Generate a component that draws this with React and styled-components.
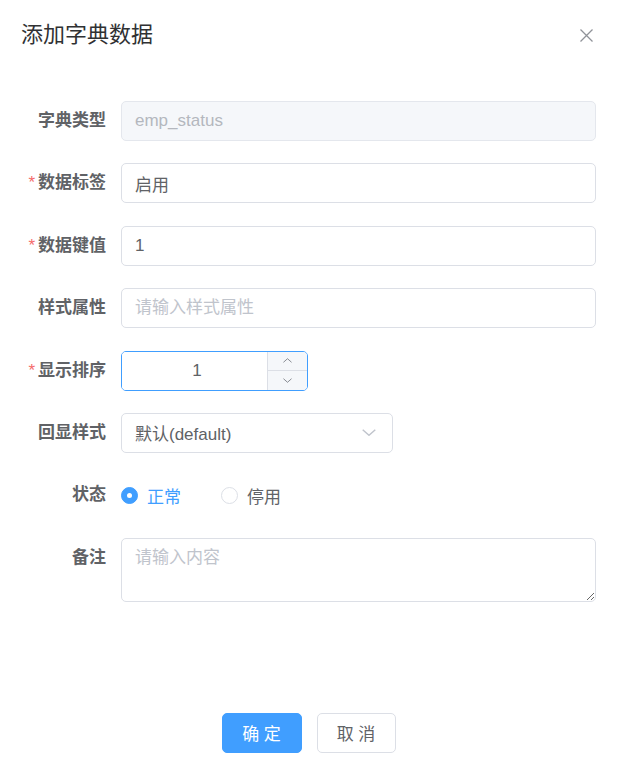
import React from "react";
import styled, { createGlobalStyle } from "styled-components";

const GlobalStyle = createGlobalStyle`
  body {
    margin: 0;
    background: #ffffff;
    font-family: "Liberation Sans", "Noto Sans CJK SC", sans-serif;
  }
  * {
    box-sizing: border-box;
  }
`;

//Layout
const Dialog = styled.div`
  width: 617px;
  height: 775px;
  background: #ffffff;
  display: flex;
  flex-direction: column;
`;

const Header = styled.div`
  display: flex;
  justify-content: space-between;
  align-items: center;
  padding: 20px 24px 10px 21px;
`;

const Title = styled.span`
  font-size: 22px;
  line-height: 30px;
  color: #303133;
`;

const CloseButton = styled.button`
  border: none;
  background: none;
  padding: 0;
  width: 14px;
  height: 14px;
  display: flex;
  align-items: center;
  justify-content: center;
  color: #909399;
  cursor: pointer;
`;

const Form = styled.form`
  padding: 41px 21px 0 21px;
`;

const FormItem = styled.div`
  display: flex;
  align-items: flex-start;
  margin-bottom: 22.4px;
`;

const Label = styled.label`
  width: 100px;
  flex-shrink: 0;
  padding-right: 15px;
  text-align: right;
  font-size: 17px;
  font-weight: 700;
  line-height: 40px;
  color: #606266;

  &::before {
    content: ${(props) => (props.required ? '"*"' : "none")};
    color: #f56c6c;
    margin-right: 3px;
    font-weight: 400;
  }
`;

const Content = styled.div`
  flex: 1;
  min-height: 40px;
  display: flex;
  align-items: center;
`;

//Inputs
const TextInput = styled.input`
  width: 100%;
  height: 40px;
  padding: 0 13px;
  border: 1px solid ${(props) => (props.disabled ? "#E4E7ED" : "#DCDFE6")};
  border-radius: 5px;
  background: ${(props) => (props.disabled ? "#F5F7FA" : "#ffffff")};
  color: ${(props) => (props.disabled ? "#B4B7BE" : "#606266")};
  font-family: inherit;
  font-size: 17px;
  outline: none;

  &::placeholder {
    color: #c0c4cc;
  }
`;

const NumberBox = styled.div`
  width: 187px;
  height: 40px;
  display: flex;
  border: 1px solid #409eff;
  border-radius: 5px;
  overflow: hidden;
`;

const NumberField = styled.input`
  flex: 1;
  min-width: 0;
  border: none;
  outline: none;
  padding: 0 0 0 5px;
  text-align: center;
  font-family: inherit;
  font-size: 17px;
  color: #606266;
`;

const Controls = styled.div`
  width: 40px;
  display: flex;
  flex-direction: column;
  border-left: 1px solid #dcdfe6;
  background: #f5f7fa;
`;

const ControlButton = styled.span`
  flex: 1;
  display: flex;
  align-items: center;
  justify-content: center;
  color: #7d8088;
  border-bottom: ${(props) => (props.top ? "1px solid #DCDFE6" : "none")};
  cursor: pointer;
`;

const Select = styled.div`
  width: 272px;
  height: 40px;
  display: flex;
  align-items: center;
  justify-content: space-between;
  padding: 0 16px 0 13px;
  border: 1px solid #dcdfe6;
  border-radius: 5px;
  font-size: 17px;
  color: #606266;
  cursor: pointer;
`;

const SelectArrow = styled.span`
  display: flex;
  color: #c0c4cc;
`;

const RadioGroup = styled.div`
  height: 40px;
  display: flex;
  align-items: center;
`;

const Radio = styled.label`
  display: inline-flex;
  align-items: center;
  margin-right: 40px;
  font-size: 17px;
  color: ${(props) => (props.checked ? "#409EFF" : "#606266")};
  cursor: pointer;
`;

const RadioDot = styled.span`
  width: 17px;
  height: 17px;
  border-radius: 50%;
  margin-right: 9px;
  border: 1px solid ${(props) => (props.checked ? "#409EFF" : "#DCDFE6")};
  background: ${(props) => (props.checked ? "#409EFF" : "#ffffff")};
  display: flex;
  align-items: center;
  justify-content: center;

  &::after {
    content: "";
    width: 5px;
    height: 5px;
    border-radius: 50%;
    background: #ffffff;
    display: ${(props) => (props.checked ? "block" : "none")};
  }
`;

const TextArea = styled.textarea`
  width: 100%;
  height: 64px;
  padding: 6px 13px;
  border: 1px solid #dcdfe6;
  border-radius: 5px;
  font-family: inherit;
  font-size: 17px;
  line-height: 1.5;
  color: #606266;
  resize: vertical;
  outline: none;

  &::placeholder {
    color: #c0c4cc;
  }
`;

//Footer
const Footer = styled.div`
  display: flex;
  justify-content: center;
  gap: 15px;
  padding-top: 88.8px;
`;

const Button = styled.button`
  width: ${(props) => (props.primary ? "80px" : "79px")};
  height: 40px;
  border-radius: 5px;
  border: 1px solid ${(props) => (props.primary ? "#409EFF" : "#DCDFE6")};
  background: ${(props) => (props.primary ? "#409EFF" : "#ffffff")};
  color: ${(props) => (props.primary ? "#ffffff" : "#606266")};
  font-family: inherit;
  font-size: 17px;
  white-space: pre;
  cursor: pointer;
`;

const Chevron = ({ up, width = 9, height = 5 }) => (
  <svg width={width} height={height} viewBox="0 0 10 5" fill="none">
    <path
      d={up ? "M0.5 4.5 L5 0.5 L9.5 4.5" : "M0.5 0.5 L5 4.5 L9.5 0.5"}
      stroke="currentColor"
      strokeWidth="1"
    />
  </svg>
);

export default function App() {
  return (
    <Dialog>
      <GlobalStyle />
      <Header>
        <Title>添加字典数据</Title>
        <CloseButton type="button">
          <svg width="13" height="13" viewBox="0 0 13 13">
            <path
              d="M0.5 0.5 L12.5 12.5 M12.5 0.5 L0.5 12.5"
              stroke="currentColor"
              strokeWidth="1.3"
            />
          </svg>
        </CloseButton>
      </Header>
      <Form>
        <FormItem>
          <Label>字典类型</Label>
          <Content>
            <TextInput disabled defaultValue="emp_status" />
          </Content>
        </FormItem>
        <FormItem>
          <Label required>数据标签</Label>
          <Content>
            <TextInput defaultValue="启用" />
          </Content>
        </FormItem>
        <FormItem>
          <Label required>数据键值</Label>
          <Content>
            <TextInput defaultValue="1" />
          </Content>
        </FormItem>
        <FormItem>
          <Label>样式属性</Label>
          <Content>
            <TextInput placeholder="请输入样式属性" />
          </Content>
        </FormItem>
        <FormItem>
          <Label required>显示排序</Label>
          <Content>
            <NumberBox>
              <NumberField defaultValue="1" />
              <Controls>
                <ControlButton top>
                  <Chevron up />
                </ControlButton>
                <ControlButton>
                  <Chevron />
                </ControlButton>
              </Controls>
            </NumberBox>
          </Content>
        </FormItem>
        <FormItem>
          <Label>回显样式</Label>
          <Content>
            <Select>
              <span>默认(default)</span>
              <SelectArrow>
                <Chevron width={14} height={7} />
              </SelectArrow>
            </Select>
          </Content>
        </FormItem>
        <FormItem>
          <Label>状态</Label>
          <Content>
            <RadioGroup>
              <Radio checked>
                <RadioDot checked />
                正常
              </Radio>
              <Radio>
                <RadioDot />
                停用
              </Radio>
            </RadioGroup>
          </Content>
        </FormItem>
        <FormItem>
          <Label>备注</Label>
          <Content>
            <TextArea placeholder="请输入内容" />
          </Content>
        </FormItem>
      </Form>
      <Footer>
        <Button primary type="button">
          确 定
        </Button>
        <Button type="button">取 消</Button>
      </Footer>
    </Dialog>
  );
}
